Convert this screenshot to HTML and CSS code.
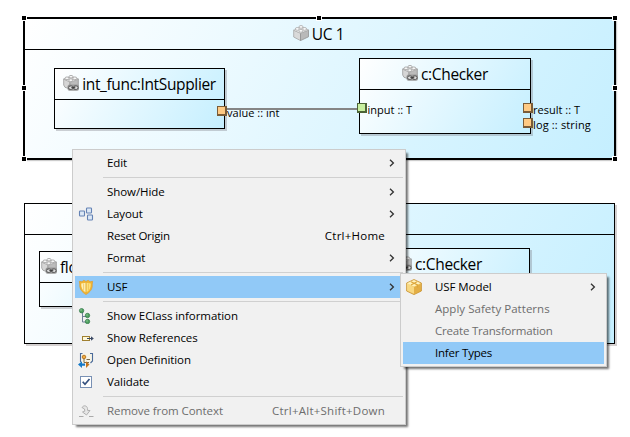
FILE: index.html
```
<!DOCTYPE html>
<html lang="en">
<head>
<meta charset="utf-8">
<title>Diagram editor</title>
<link rel="stylesheet" href="styles.css">
</head>
<body>
<svg class="defs" width="0" height="0" aria-hidden="true">
  <linearGradient id="gold" x1="0" y1="0" x2="1" y2="1"><stop offset="0" stop-color="#fff0b0"/><stop offset="1" stop-color="#e0a020"/></linearGradient>
  <symbol id="brick" viewBox="0 0 16 16">
    <path d="M.7 5.2 7.500 8v7.600L.7 12z" fill="#d9d9d9" stroke="#a5a5a5" stroke-width=".8"/>
    <path d="M7.500 8l8-3v6.800l-8 3.800z" fill="#b9b9b9" stroke="#929292" stroke-width=".8"/>
    <path d="M.7 5.200 8 1.500l7.500 3.500-8 3.300z" fill="#eee" stroke="#aaa" stroke-width=".7"/>
    <g fill="#f8f8f8" stroke="#a0a0a0" stroke-width=".7"><ellipse cx="8" cy="1.900" rx="2" ry="1.400"/><ellipse cx="4.300" cy="3.900" rx="2" ry="1.400"/><ellipse cx="11.600" cy="3.900" rx="2" ry="1.400"/><ellipse cx="7.900" cy="5.800" rx="2" ry="1.400"/></g>
  </symbol>
  <symbol id="brick-link" viewBox="0 0 16 16">
    <path d="M.7 4 7 6.500V14L2 12.300.7 10z" fill="#d6d6d6" stroke="#999" stroke-width=".8"/>
    <path d="M7 6.500 15.300 4v9L7 14z" fill="#bcbcbc" stroke="#929292" stroke-width=".8"/>
    <path d="M.7 4 8 1.500 15.300 4 7.500 7.500z" fill="#eaeaea" stroke="#a5a5a5" stroke-width=".7"/>
    <g fill="#f6f6f6" stroke="#949494" stroke-width=".7"><ellipse cx="8" cy="1.700" rx="2" ry="1.300"/><ellipse cx="4" cy="3.300" rx="2" ry="1.400"/><ellipse cx="11.800" cy="3.300" rx="2" ry="1.400"/><ellipse cx="7.800" cy="5.200" rx="2" ry="1.400"/></g>
    <rect x="4.500" y="9.500" width="11.500" height="6.300" rx="2" fill="#999"/>
    <rect x="5.600" y="11" width="4.400" height="3.400" rx="1.500" fill="#ddd" stroke="#555" stroke-width="1"/>
    <rect x="10.600" y="11" width="4.400" height="3.400" rx="1.500" fill="#ddd" stroke="#555" stroke-width="1"/>
    <path d="M8.300 12.700h4" stroke="#333" stroke-width="1"/>
  </symbol>
  <symbol id="chevron" viewBox="0 0 6 8"><path d="M1 .7 4.400 4 1 7.300" fill="none" stroke="#333" stroke-width="1.300"/></symbol>
</svg>

<main class="canvas">
  <section class="frame frame-selected">
    <header class="frame-head"><svg class="icon"><use href="#brick"/></svg><span class="uc">UC 1</span></header>
    <i class="handle h-tl"></i><i class="handle h-tc"></i><i class="handle h-tr"></i>
    <i class="handle h-ml"></i><i class="handle h-mr"></i>
    <i class="handle h-bl"></i><i class="handle h-bc"></i><i class="handle h-br"></i>
  </section>
  <section class="node node-supplier"><header class="node-head"><svg class="icon"><use href="#brick-link"/></svg><span>int_func:IntSupplier</span></header></section>
  <section class="node node-checker"><header class="node-head"><svg class="icon"><use href="#brick-link"/></svg><span>c:Checker</span></header></section>
  <span class="label l-value">value :: int</span>
  <i class="link"></i>
  <span class="label l-input">input :: T</span>
  <span class="label l-result">result :: T</span>
  <span class="label l-log">log :: string</span>
  <i class="port p-value"></i><i class="port port-in p-input"></i><i class="port p-result"></i><i class="port p-log"></i>

  <section class="frame frame-second"><header class="frame-head"></header></section>
  <section class="node node-float"><header class="node-head"><svg class="icon"><use href="#brick-link"/></svg><span>flo</span></header></section>
  <section class="node node-checker2"><header class="node-head"><svg class="icon"><use href="#brick-link"/></svg><span>c:Checker</span></header></section>

  <ul class="menu context">
    <li class="item"><span class="gutter"></span><span class="text">Edit</span><svg class="chev"><use href="#chevron"/></svg></li>
    <li class="sep"></li>
    <li class="item"><span class="gutter"></span><span class="text">Show/Hide</span><svg class="chev"><use href="#chevron"/></svg></li>
    <li class="item"><span class="gutter"><svg class="icon" viewBox="0 0 16 16"><g fill="#dce8f6" stroke="#6482b4" stroke-width="1.100"><rect x="1.500" y="5" width="5" height="5" rx=".8"/><rect x="8.500" y="2" width="5" height="5" rx=".8"/><rect x="9.500" y="9" width="5" height="5" rx=".8"/></g></svg></span><span class="text">Layout</span><svg class="chev"><use href="#chevron"/></svg></li>
    <li class="item"><span class="gutter"></span><span class="text tight">Reset Origin</span><kbd>Ctrl+Home</kbd></li>
    <li class="item"><span class="gutter"></span><span class="text">Format</span><svg class="chev"><use href="#chevron"/></svg></li>
    <li class="sep"></li>
    <li class="item active"><span class="gutter"><svg class="icon" viewBox="0 0 16 16"><path d="M1.300 2.300 4 2.800 5.800 1.300 8 2.500l2.200-1.200L12 2.800l2.700-.5-.5 2.800c.5 4.700-2 8.100-6.200 10.400C3.800 13.200 1.300 9.800 1.800 5.100z" fill="#f2b632" stroke="#dc9c30" stroke-width=".7"/><path d="M3.200 4.400 8 3.700v9.900C4.500 11.500 3 8.800 3.200 4.400z" fill="#fff1b8"/><path d="M8 3.700l4.800.7C13 8.800 11.500 11.500 8 13.600z" fill="#ffe27a"/><path d="M5.600 4.500v7M10.500 4.500v7" stroke="#f0c458" stroke-width=".8"/><path d="M8 3.500v10.300" stroke="#d39a22" stroke-width=".8"/></svg></span><span class="text">USF</span><svg class="chev"><use href="#chevron"/></svg></li>
    <li class="sep"></li>
    <li class="item"><span class="gutter"><svg class="icon" viewBox="0 0 16 16"><path d="M4.500 4v10h5M4.500 8.500h5" fill="none" stroke="#6e7f96"/><g fill="#4fa05f" stroke="#2f7747" stroke-width=".7"><circle cx="3.600" cy="2.700" r="2.200"/><circle cx="9.500" cy="7.500" r="2.200"/><circle cx="9.500" cy="13.500" r="2.200"/></g><g fill="#a5d9aa"><circle cx="3" cy="2" r=".7"/><circle cx="9" cy="6.900" r=".7"/><circle cx="9" cy="12.900" r=".7"/></g></svg></span><span class="text">Show EClass information</span></li>
    <li class="item"><span class="gutter"><svg class="icon" viewBox="0 0 16 16"><rect x="4.500" y="6.500" width="7" height="4" fill="#fff8d8" stroke="#a08030"/><path d="M9 8.500h6" stroke="#3c4a64"/><path d="M13 6.200 15.800 8.500 13 10.800z" fill="#3c4a64"/></svg></span><span class="text">Show References</span></li>
    <li class="item"><span class="gutter"><svg class="icon" viewBox="0 0 16 16"><path d="M3 1.500h11V11H3z" fill="#f7f4e6"/><path d="M4.500 1.500h-2V10M12 1.500h2.500V9l-2 2" fill="none" stroke="#4a6a9a" stroke-width="1.100"/><path d="M6 6v4.500h5M8.500 7.500H12" fill="none" stroke="#7a6a4a"/><circle cx="6" cy="5" r="1.800" fill="#f2ab3c" stroke="#a86414" stroke-width=".8"/><path d="M0 12.600 4 9.300v2.100h3v2.400H4V16z" fill="#1579c8"/><path d="M11.500 12.600 8 9.300v6.700z" fill="#c4741c"/></svg></span><span class="text">Open Definition</span></li>
    <li class="item"><span class="gutter"><svg class="icon" viewBox="0 0 16 16"><rect x="2.500" y="2.500" width="11" height="11" fill="#fff" stroke="#7890b4"/><path d="M4.700 7.700 7 10.300 11.500 5" fill="none" stroke="#34507e" stroke-width="1.700"/></svg></span><span class="text">Validate</span></li>
    <li class="sep"></li>
    <li class="item disabled"><span class="gutter"><svg class="icon" viewBox="0 0 16 16"><path d="M1 13.500h4.500M11 13.500h4.500" stroke="#aaa"/><path d="M4 4.500C5.500 2 9 2.300 9.500 5.500L9.700 7.500H12L8.500 12 4.500 9l2.300-.8L6.500 6z" fill="#e6e6e6" stroke="#aaa" stroke-width=".9"/></svg></span><span class="text">Remove from Context</span><kbd>Ctrl+Alt+Shift+Down</kbd></li>
  </ul>

  <ul class="menu submenu">
    <li class="item"><span class="gutter"><svg class="icon" viewBox="0 0 16 16"><path d="M8 .5 15.400 4v8L8 15.600.600 12V4z" fill="url(#gold)" stroke="#c89030" stroke-width=".8"/><path d="M1.500 4.300 8 1.200l6.500 3.100L8 7.600z" fill="#fff2bd"/><path d="M1.300 4.900 8 8.200v6.600L1.300 11.600z" fill="#f8d882"/><path d="M14.700 4.900 8 8.200v6.600l6.700-3.200z" fill="#e3ae45"/><path d="M5 2.800l6.500 3.100v2.600M11 2.800 5 5.900" fill="none" stroke="#dda63a" stroke-width="1.100"/></svg></span><span class="text">USF Model</span><svg class="chev"><use href="#chevron"/></svg></li>
    <li class="item disabled"><span class="gutter"></span><span class="text apply">Apply Safety Patterns</span></li>
    <li class="item disabled"><span class="gutter"></span><span class="text tight">Create Transformation</span></li>
    <li class="item active"><span class="gutter"></span><span class="text tight">Infer Types</span></li>
  </ul>
</main>
</body>
</html>
```
FILE: styles.css
```
* { box-sizing: border-box; }
body { margin: 0; background: #fff; color: #000; font-family: "Open Sans", "Noto Sans", sans-serif; }
.defs { position: absolute; }
.canvas { position: relative; width: 630px; height: 437px; overflow: hidden; }
.icon { display: block; flex: none; width: 16px; height: 16px; }

/* Diagram frames and nodes, placed on the free canvas */
.frame, .node { position: absolute; background: linear-gradient(120deg, #fff, #c5efff); }
.frame-head, .node-head { display: flex; align-items: center; justify-content: center; gap: 3px; border-bottom: 1px solid #000; font-size: 15.5px; line-height: 20px; letter-spacing: -.35px; white-space: nowrap; }
.frame-head { height: 31px; }
.frame-head .icon { margin: -2px 0 0 -2px; }
.frame-selected { left: 23px; top: 17px; width: 593px; height: 143px; border: 2px solid #000; box-shadow: 1px 1px 1px #ccc; }
.frame-second { left: 24px; top: 203px; width: 591px; height: 141px; border: 1px solid #000; box-shadow: 2px 2px 0 #d4d0d0; }
.node { border: 1px solid #000; box-shadow: 2px 2px 0 rgba(120, 120, 130, .35); }
.node-head { height: 31px; }
.node-head .icon { margin-top: -2px; }
.node-supplier { left: 54px; top: 68px; width: 171px; height: 61px; }
.node-checker { left: 359px; top: 58px; width: 172px; height: 76px; }
.node-float { left: 39px; top: 251px; width: 182px; height: 56px; }
.node-float .node-head { justify-content: flex-start; padding-left: 1px; }
.node-checker2 { left: 348px; top: 248px; width: 182px; height: 76px; }

.handle { position: absolute; width: 6px; height: 6px; background: #000; border: 1px solid #fff; }
.h-tl, .h-tc, .h-tr { top: -4px; }
.h-ml, .h-mr { top: 66px; }
.h-bl, .h-bc, .h-br { bottom: -4px; }
.h-tl, .h-ml, .h-bl { left: -4px; }
.h-tc, .h-bc { left: 291px; }
.h-tr, .h-mr, .h-br { right: -4px; }

.link { position: absolute; left: 227px; top: 108px; width: 131px; height: 2px; background: #858585; }
.port { position: absolute; width: 10px; height: 10px; background: #ffca84; border: 1px solid #7a5c38; border-width: 1px 2px 2px 1px; }
.port-in { background: #c8f0a0; border-color: #4c6438; }
.p-value { left: 217px; top: 106px; }
.p-input { left: 357px; top: 103px; }
.p-result { left: 523px; top: 103px; }
.p-log { left: 523px; top: 118px; }
.label { position: absolute; font-size: 11px; line-height: 14px; letter-spacing: .02px; white-space: nowrap; }
.l-value { left: 227px; top: 106px; }
.l-input { left: 367.5px; top: 103px; }
.l-result { left: 533px; top: 103px; }
.l-log { left: 533px; top: 118px; letter-spacing: .15px; }

/* Menus */
.menu { position: absolute; margin: 0; padding: 2px; list-style: none; border: 1px solid #ccc; background: #f1f1f1; box-shadow: 3px 3px 2px -1px rgba(0, 0, 0, .55); font-size: 11.5px; }
.context { left: 72px; top: 149px; width: 334px; }
.submenu { left: 400px; top: 273px; width: 207px; }
.item { display: flex; align-items: center; height: 22px; padding-right: 18px; line-height: 20px; }
.gutter { flex: none; width: 32px; padding-left: 3px; }
.text { flex: 1; letter-spacing: -.07px; white-space: nowrap; }
.tight { letter-spacing: -.2px; }
.apply { letter-spacing: .03px; }
.item kbd { font: inherit; letter-spacing: .24px; }
.chev { width: 6px; height: 8px; margin: -1px -10px 0 0; }
.sep { height: 7px; padding: 3px 0 3px 28px; }
.sep::before { content: ""; display: block; height: 1px; background: #d0d0d0; }
.active { background: #91c9f7; }
.disabled { color: #6d6d6d; }
```
